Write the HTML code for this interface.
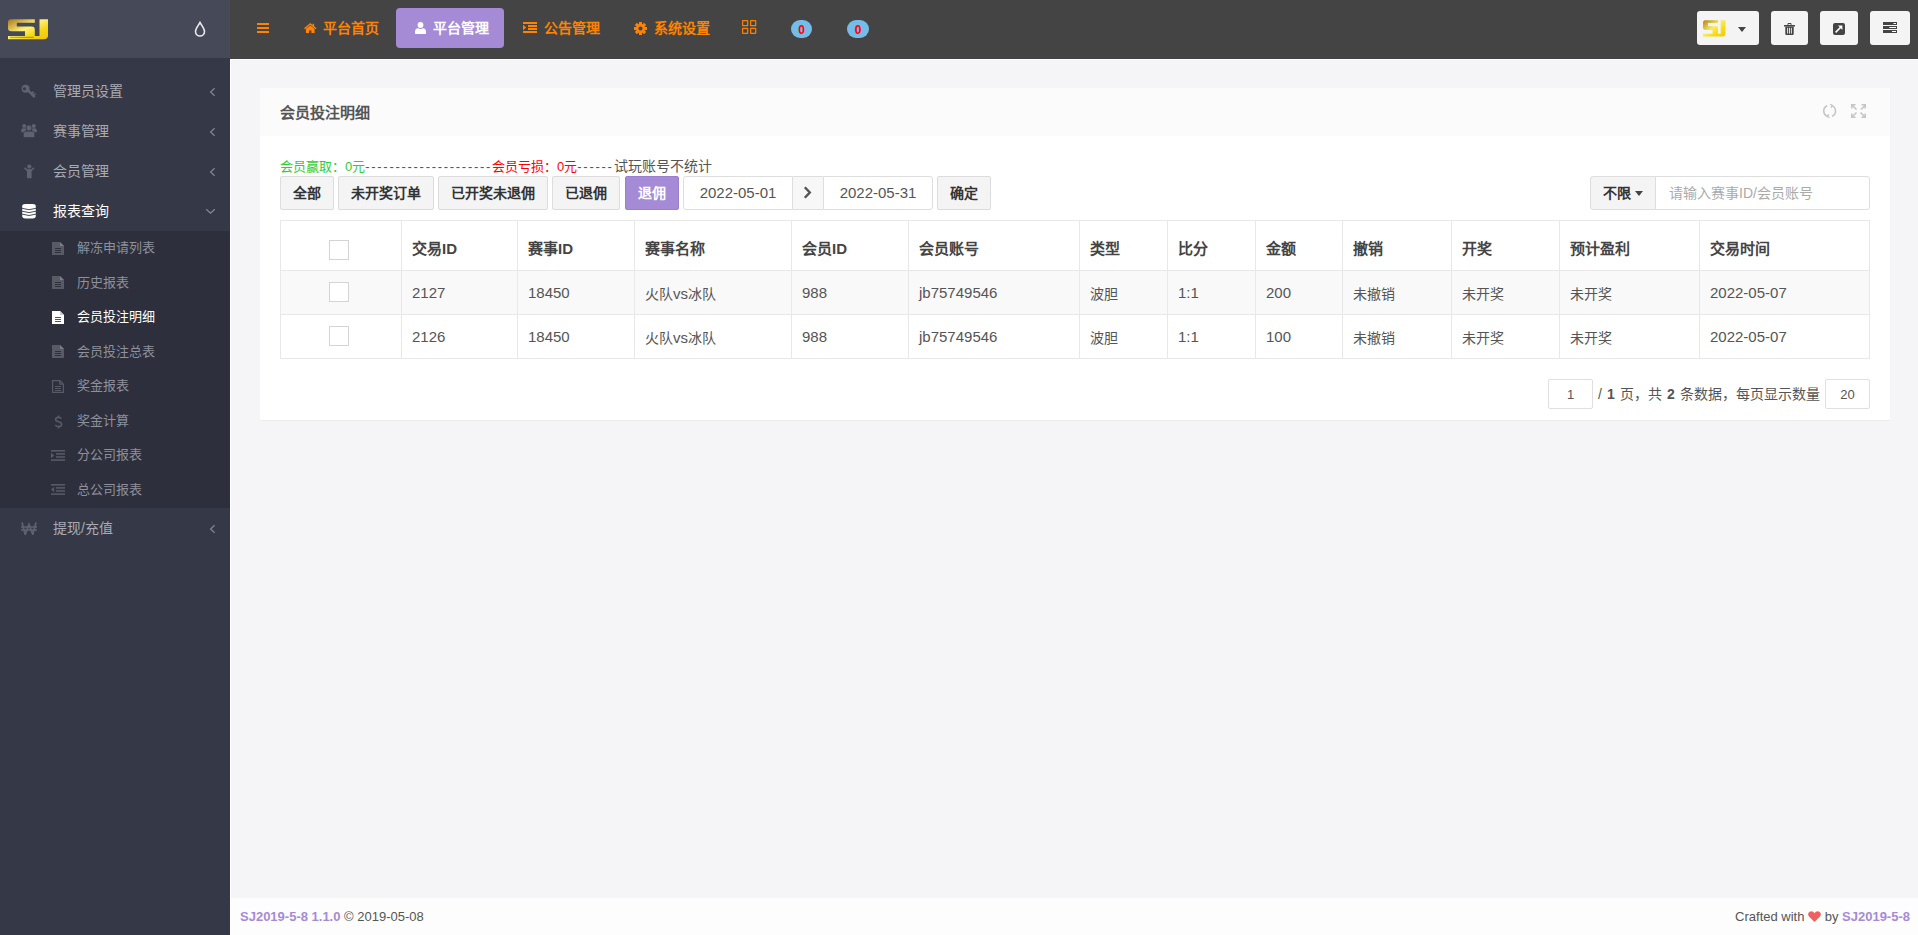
<!DOCTYPE html>
<html lang="zh-CN"><head><meta charset="utf-8">
<style>
*{margin:0;padding:0;box-sizing:border-box}
html,body{width:1918px;height:935px;overflow:hidden;background:#f5f5f7;font-family:"Liberation Sans",sans-serif;font-size:14px;color:#555}
.abs{position:absolute}
svg{position:absolute;display:block}
#side{position:absolute;left:0;top:0;width:230px;height:935px;background:#353847}
#logo{position:absolute;left:0;top:0;width:230px;height:58px;background:#464958}
.mi{position:absolute;left:0;width:230px;height:40px;line-height:40px;color:#a9abb4;font-size:14px}
.mi .tx{position:absolute;left:53px;top:0}
#sub{position:absolute;left:0;top:231px;width:230px;height:277px;background:#2d2f3c}
.si{position:absolute;left:0;width:230px;height:34.5px;line-height:34.5px;color:#8e909b;font-size:13px}
.si .tx{position:absolute;left:77px;top:0}
#hdr{position:absolute;left:230px;top:0;width:1688px;height:59px;background:#444}
.nv{position:absolute;top:0;height:56px;line-height:56px;color:#ff8200;font-weight:bold;font-size:14px;white-space:nowrap}
.hb{position:absolute;top:11px;height:34px;background:#f4f4f4;border-radius:3px}
#main{position:absolute;left:230px;top:59px;width:1688px;height:839px;background:#f5f5f7;border-top:1px solid #fff;border-left:1px solid #fff}
#panel{position:absolute;left:260px;top:88px;width:1630px;height:332px;background:#fff;box-shadow:0 1px 0 #ededf0}
#ph{position:absolute;left:0;top:0;width:1630px;height:48px;background:#fbfbfc}
.btn{position:absolute;top:176px;height:34px;line-height:32px;border:1px solid #dcdcdc;background:#f4f4f4;color:#333;font-weight:bold;font-size:14px;text-align:center;border-radius:2px}
.inp{position:absolute;top:176px;height:34px;line-height:32px;border:1px solid #dedede;background:#fff;color:#555;font-size:15px;text-align:center}
table{position:absolute;left:280px;top:220px;border-collapse:collapse;table-layout:fixed}
td,th{border:1px solid #e8e8e8;text-align:left;padding:0 0 0 10px;font-size:14px;color:#555;white-space:nowrap}
th{height:50px;font-size:15px;color:#444;font-weight:bold;padding-top:3px}
td{height:44px}
tr.odd td{background:#f9f9f9}
.n{font-size:15px}
.cb{display:block;position:relative;top:-1px;width:20px;height:20px;border:1px solid #d4d4d4;background:#fff;margin-left:38px}
th .cb{top:3px}
#foot{position:absolute;left:230px;top:898px;width:1688px;height:37px;background:#fdfdfd;font-size:13px;color:#555}
.pg{position:absolute;top:379px;height:30px;line-height:29px;border:1px solid #e0e0e0;background:#fff;border-radius:2px;text-align:center;font-size:13px;color:#555}
</style></head><body>

<div id="side">
  <div id="logo">
    <svg style="left:8px;top:18.5px" width="41" height="21" viewBox="0 0 41 21">
      <defs><linearGradient id="g1" x1="0" y1="0" x2="1" y2="1">
        <stop offset="0" stop-color="#a8761e"/><stop offset="0.45" stop-color="#fff07a"/><stop offset="0.7" stop-color="#f5d814"/><stop offset="1" stop-color="#f0c010"/></linearGradient></defs>
      <path fill="url(#g1)" d="M0,3.4 Q0,0.3 3.2,0.3 H26.8 V3.8 H8.8 V7.6 H23.8 Q26.8,7.6 26.8,10.6 V16.9 H17 V12.2 H3.2 Q0,12.2 0,9.2 Z M31.5,0.3 H40 V16.5 Q40,20.3 36,20.3 H0 V16.9 H31.5 Z"/>
      <path fill="#5a4a20" opacity="0.5" d="M1.8,17.8 H25.6 V18.8 H1.8 Z"/>
    </svg>
    <svg style="left:193px;top:21px" width="14" height="16" viewBox="0 0 14 16">
      <path d="M7,1.5 C5,5 2.5,7.5 2.5,10.5 A4.5,4.5 0 0 0 11.5,10.5 C11.5,7.5 9,5 7,1.5 Z" fill="none" stroke="#e8e8ee" stroke-width="1.6"/>
    </svg>
  </div>

  <!-- key -->
  <svg style="left:21px;top:84px" width="16" height="15" viewBox="0 0 16 15" fill="#5f6270">
    <path d="M4.6,0.8 A4,4 0 1 0 4.6,8.8 A4,4 0 1 0 4.6,0.8 Z M3.4,3.3 A1.5,1.5 0 1 1 3.4,6.3 A1.5,1.5 0 1 1 3.4,3.3 Z" fill-rule="evenodd"/>
    <path d="M6.4,7.6 L8.2,5.8 L14.6,12.2 L12.8,14 Z M10.6,8.4 L12,7 L13.4,8.4 L12,9.8 Z M12.6,10.4 L14,9 L15,10 L13.6,11.4 Z"/>
  </svg>
  
  <!-- users -->
  <svg style="left:21px;top:123px" width="16" height="15" viewBox="0 0 16 15" fill="#5f6270">
    <circle cx="3.2" cy="3" r="2"/><circle cx="12.8" cy="3" r="2"/>
    <path d="M0.2,9.2 V7 Q0.2,5.2 2.2,5.2 H4.8 V9.2 Z M15.8,9.2 V7 Q15.8,5.2 13.8,5.2 H11.2 V9.2 Z"/>
    <circle cx="8" cy="5" r="2.9" stroke="#353847" stroke-width="0.6"/>
    <path d="M2.3,14.6 V10.6 Q2.3,8.3 4.8,8.3 H11.2 Q13.7,8.3 13.7,10.6 V14.6 Z" stroke="#353847" stroke-width="0.6"/>
  </svg>
  <!-- male -->
  <svg style="left:24px;top:164px" width="11" height="15" viewBox="0 0 11 15" fill="#5f6270">
    <circle cx="5.3" cy="2.6" r="2.1"/>
    <path d="M0.8,3.3 L0,4.3 L3,7.2 V14.3 H7.6 V7.2 L10.6,4.3 L9.8,3.3 L7,5.2 H3.6 Z"/>
  </svg>
  <!-- database -->
  <svg style="left:22px;top:204px" width="14" height="15" viewBox="0 0 14 15">
    <rect x="0.2" y="0" width="13.6" height="14.5" rx="3.2" ry="2.4" fill="#fff"/>
    <path d="M0,4.3 Q7,7.1 14,4.3 M0,7.2 Q7,10 14,7.2 M0,10.1 Q7,12.9 14,10.1" stroke="#353847" stroke-width="0.9" fill="none"/>
  </svg>
  <!-- chevrons -->
  <svg style="left:209px;top:87px" width="7" height="10" viewBox="0 0 7 10"><path d="M5.6,1.2 L1.6,5 L5.6,8.8" fill="none" stroke="#80838f" stroke-width="1.3"/></svg>
  <svg style="left:209px;top:127px" width="7" height="10" viewBox="0 0 7 10"><path d="M5.6,1.2 L1.6,5 L5.6,8.8" fill="none" stroke="#80838f" stroke-width="1.3"/></svg>
  <svg style="left:209px;top:167px" width="7" height="10" viewBox="0 0 7 10"><path d="M5.6,1.2 L1.6,5 L5.6,8.8" fill="none" stroke="#80838f" stroke-width="1.3"/></svg>
  <svg style="left:205px;top:207px" width="11" height="8" viewBox="0 0 11 8"><path d="M1.2,2.2 L5.5,6.2 L9.8,2.2" fill="none" stroke="#858793" stroke-width="1.3"/></svg>
  <svg style="left:209px;top:524px" width="7" height="10" viewBox="0 0 7 10"><path d="M5.6,1.2 L1.6,5 L5.6,8.8" fill="none" stroke="#80838f" stroke-width="1.3"/></svg>

  <div class="mi" style="top:71px"><span class="tx">管理员设置</span></div>
  <div class="mi" style="top:111px"><span class="tx">赛事管理</span></div>
  <div class="mi" style="top:151px"><span class="tx">会员管理</span></div>
  <div class="mi" style="top:191px;color:#fff"><span class="tx">报表查询</span></div>
  <div id="sub">
    <div class="si" style="top:0"><span class="tx">解冻申请列表</span></div>
    <div class="si" style="top:34.5px"><span class="tx">历史报表</span></div>
    <div class="si" style="top:69px;color:#fff"><span class="tx">会员投注明细</span></div>
    <div class="si" style="top:103.5px"><span class="tx">会员投注总表</span></div>
    <div class="si" style="top:138px"><span class="tx">奖金报表</span></div>
    <div class="si" style="top:172.5px"><span class="tx">奖金计算</span></div>
    <div class="si" style="top:207px"><span class="tx">分公司报表</span></div>
    <div class="si" style="top:241.5px"><span class="tx">总公司报表</span></div>
  </div>
  <!-- sub icons -->
  <svg style="left:52px;top:242px" width="12" height="13" viewBox="0 0 12 13"><path d="M0,0 H8 L12,4 V13 H0 Z" fill="#585a66"/><path d="M8,0 V4 H12" fill="#7a7c88"/><path d="M3,6.5 H9 M3,8.5 H9 M3,10.5 H9" stroke="#2d2f3c" stroke-width="1"/></svg>
  <svg style="left:52px;top:276px" width="12" height="13" viewBox="0 0 12 13"><path d="M0,0 H8 L12,4 V13 H0 Z" fill="#585a66"/><path d="M8,0 V4 H12" fill="#7a7c88"/><path d="M3,6.5 H9 M3,8.5 H9 M3,10.5 H9" stroke="#2d2f3c" stroke-width="1"/></svg>
  <svg style="left:52px;top:311px" width="12" height="13" viewBox="0 0 12 13"><path d="M0,0 H8 L12,4 V13 H0 Z" fill="#fff"/><path d="M8,0 V4 H12" fill="#ccc"/><path d="M3,6.5 H9 M3,8.5 H9 M3,10.5 H9" stroke="#555" stroke-width="1"/></svg>
  <svg style="left:52px;top:345px" width="12" height="13" viewBox="0 0 12 13"><path d="M0,0 H8 L12,4 V13 H0 Z" fill="#585a66"/><path d="M8,0 V4 H12" fill="#7a7c88"/><path d="M3,6.5 H9 M3,8.5 H9 M3,10.5 H9" stroke="#2d2f3c" stroke-width="1"/></svg>
  <svg style="left:52px;top:380px" width="12" height="13" viewBox="0 0 12 13"><path d="M0.6,0.6 H7.8 L11.4,4.2 V12.4 H0.6 Z M7.8,0.6 V4.2 H11.4" fill="none" stroke="#585a66" stroke-width="1.2"/><path d="M3,6.5 H9 M3,8.5 H9 M3,10.5 H9" stroke="#585a66" stroke-width="1"/></svg>
  <svg style="left:54px;top:415px" width="9" height="14" viewBox="0 0 9 14"><path d="M7.4,3.6 Q6.8,2.4 4.5,2.4 Q1.6,2.4 1.6,4.6 Q1.6,6.3 4.5,6.8 Q7.6,7.3 7.6,9.4 Q7.6,11.6 4.5,11.6 Q2.1,11.6 1.3,10.2 M4.5,0.6 V2.4 M4.5,11.6 V13.4" fill="none" stroke="#585a66" stroke-width="1.6"/></svg>
  <svg style="left:51px;top:450px" width="14" height="11" viewBox="0 0 14 11" fill="#585a66"><rect x="0" y="0" width="14" height="1.6"/><rect x="5" y="3.1" width="9" height="1.6"/><rect x="5" y="6.2" width="9" height="1.6"/><rect x="0" y="9.3" width="14" height="1.6"/><path d="M0,2.8 L3.2,5.5 L0,8.2 Z"/></svg>
  <svg style="left:51px;top:484px" width="14" height="11" viewBox="0 0 14 11" fill="#585a66"><rect x="0" y="0" width="14" height="1.6"/><rect x="5" y="3.1" width="9" height="1.6"/><rect x="5" y="6.2" width="9" height="1.6"/><rect x="0" y="9.3" width="14" height="1.6"/><path d="M3.2,2.8 L0,5.5 L3.2,8.2 Z"/></svg>

  <div class="mi" style="top:508px"><span class="tx">提现/充值</span></div>
  <!-- won -->
  <svg style="left:21px;top:522px" width="16" height="13" viewBox="0 0 16 13"><path d="M1,0.5 L4.2,12.5 L8,2.5 L11.8,12.5 L15,0.5 M0,5 H16 M0,8 H16" fill="none" stroke="#5f6270" stroke-width="1.7"/></svg>
</div>

<div id="hdr"></div>
<!-- bars -->
<svg style="left:257px;top:23px" width="12" height="10" viewBox="0 0 12 10" fill="#ff8200"><rect y="0" width="12" height="2"/><rect y="4" width="12" height="2"/><rect y="8" width="12" height="2"/></svg>
<!-- home -->
<svg style="left:304px;top:22.6px" width="12.5" height="10.6" viewBox="0 0.5 13 11" preserveAspectRatio="none" fill="#ff8200"><path d="M6.5,0.5 L0,6 L1,7 L6.5,2.4 L12,7 L13,6 L10.5,3.9 V1.2 H9 V2.6 Z"/><path d="M2,6.6 L6.5,3 L11,6.6 V11.5 H7.7 V8.3 H5.3 V11.5 H2 Z"/></svg>
<div class="nv" style="left:323px">平台首页</div>
<div class="abs" style="left:396px;top:8px;width:108px;height:40px;background:#a58bd5;border-radius:4px"></div>
<!-- user -->
<svg style="left:415px;top:22px" width="11" height="12" viewBox="0 0 11 12" fill="#fff"><circle cx="5.5" cy="3" r="2.9"/><path d="M0,12 V9.8 Q0,6.6 3,6.3 Q5.5,7.8 8,6.3 Q11,6.6 11,9.8 V12 Z"/></svg>
<div class="nv" style="left:433px;color:#fff">平台管理</div>
<!-- indent -->
<svg style="left:523px;top:22px" width="14" height="11" viewBox="0 0 14 11" fill="#ff8200"><rect x="0" y="0" width="14" height="2"/><rect x="5" y="3" width="9" height="2"/><rect x="5" y="6" width="9" height="2"/><rect x="0" y="9" width="14" height="2"/><path d="M0,2.8 L3.2,5.5 L0,8.2 Z"/></svg>
<div class="nv" style="left:544px">公告管理</div>
<!-- cog -->
<svg style="left:634px;top:22px" width="13" height="13" viewBox="0 0 13 13"><g fill="#ff8200" transform="translate(6.5,6.5)"><circle r="4.6"/><rect x="-1.5" y="-6.5" width="3" height="13"/><rect x="-1.5" y="-6.5" width="3" height="13" transform="rotate(45)"/><rect x="-1.5" y="-6.5" width="3" height="13" transform="rotate(90)"/><rect x="-1.5" y="-6.5" width="3" height="13" transform="rotate(135)"/></g><circle cx="6.5" cy="6.5" r="2" fill="#444"/></svg>
<div class="nv" style="left:654px">系统设置</div>
<!-- grid -->
<svg style="left:742px;top:20px" width="15" height="15" viewBox="0 0 15 15" fill="none" stroke="#ff8000" stroke-width="1.2"><rect x="0.6" y="0.6" width="5.1" height="5.1" rx="0.3"/><rect x="8.6" y="0.6" width="5.1" height="5.1" rx="0.3"/><rect x="0.6" y="8.3" width="5.1" height="5.1" rx="0.3"/><rect x="8.6" y="8.3" width="5.1" height="5.1" rx="0.3"/></svg>
<div class="abs" style="left:791px;top:20px;width:21px;height:18px;border-radius:9px;background:#74bde9;color:#f00;font-weight:bold;font-size:12px;line-height:20px;text-align:center">0</div>
<div class="abs" style="left:847px;top:20px;width:22px;height:18px;border-radius:9px;background:#74bde9;color:#f00;font-weight:bold;font-size:12px;line-height:20px;text-align:center">0</div>

<div class="hb" style="left:1697px;width:62px"></div>
<svg style="left:1703px;top:19.5px" width="23" height="17" viewBox="0 0 41 21" preserveAspectRatio="none">
  <defs><linearGradient id="g2" x1="0" y1="0" x2="1" y2="1"><stop offset="0" stop-color="#b0801c"/><stop offset="0.45" stop-color="#f8ec60"/><stop offset="0.7" stop-color="#f8dc10"/><stop offset="1" stop-color="#f0c810"/></linearGradient></defs>
  <path fill="url(#g2)" d="M0,3.4 Q0,0.3 3.2,0.3 H26.8 V3.8 H8.8 V7.6 H23.8 Q26.8,7.6 26.8,10.6 V16.9 H17 V12.2 H3.2 Q0,12.2 0,9.2 Z M31.5,0.3 H40 V16.5 Q40,20.3 36,20.3 H0 V16.9 H31.5 Z"/>
</svg>
<svg style="left:1738px;top:27px" width="8" height="5" viewBox="0 0 8 5"><path d="M0,0 H8 L4,5 Z" fill="#444"/></svg>
<div class="hb" style="left:1771px;width:37px"></div>
<svg style="left:1784px;top:23px" width="11" height="12" viewBox="0 0 11 12" fill="#444"><path d="M3.5,2 V1 Q3.5,0 4.5,0 H6.5 Q7.5,0 7.5,1 V2 H6.6 V1 H4.4 V2 Z"/><rect x="0" y="2" width="11" height="1.5"/><path d="M1.3,3.5 H9.7 V11 Q9.7,12 8.7,12 H2.3 Q1.3,12 1.3,11 Z"/><path d="M3.6,4.8 V10.6 M5.5,4.8 V10.6 M7.4,4.8 V10.6" stroke="#f4f4f4" stroke-width="0.9"/></svg>
<div class="hb" style="left:1820px;width:38px"></div>
<svg style="left:1833px;top:23px" width="12" height="12" viewBox="0 0 12 12"><rect width="12" height="12" rx="2" fill="#444"/><path d="M2.6,9.4 L8.2,3.8" stroke="#fff" stroke-width="1.6"/><path d="M5,2.6 H9.4 V7 Z" fill="#fff"/></svg>
<div class="hb" style="left:1870px;width:40px"></div>
<svg style="left:1883px;top:22px" width="14" height="11" viewBox="0 0 14 11" fill="#444"><rect y="0" width="14" height="3"/><rect y="4" width="14" height="3"/><rect y="8" width="14" height="3"/><rect x="10.5" y="1" width="2.5" height="1" fill="#fff"/><rect x="6.3" y="5" width="6.7" height="1" fill="#fff"/><rect x="9" y="9" width="4" height="1" fill="#fff"/></svg>

<div id="main"></div>
<div id="panel"><div id="ph"></div></div>
<div class="abs" style="left:280px;top:104px;font-size:15px;font-weight:bold;color:#555;line-height:18px">会员投注明细</div>
<!-- refresh -->
<svg style="left:1823px;top:104px" width="14" height="14" viewBox="0 0 14 14" fill="none" stroke="#c4c4c4" stroke-width="1.5"><path d="M4.2,1.8 A5.6,5.6 0 0 0 5,12.4"/><path d="M9,12.2 A5.6,5.6 0 0 0 8.4,1.6"/><path d="M7.2,0.3 L9.4,1.5 L8,3.6" stroke-width="1.3"/><path d="M6.6,13.7 L4.4,12.5 L5.8,10.4" stroke-width="1.3"/></svg>
<!-- expand -->
<svg style="left:1851px;top:104px" width="15" height="14" viewBox="0 0 15 14" fill="none" stroke="#c4c4c4" stroke-width="1.5"><path d="M1,1 L5.5,5.5 M10,5.5 L14,1.5 M1,13 L5.5,8.5 M14,13 L9.5,8.5"/><path d="M0.8,4.5 V0.8 H4.5 M10.5,0.8 H14.2 V4.5 M0.8,9.5 V13.2 H4.5 M10.5,13.2 H14.2 V9.5"/></svg>

<div class="abs" style="left:280px;top:157px;font-size:13px;line-height:18px;white-space:nowrap"><span style="color:#3c3">会员赢取：0元</span><span style="color:#555;letter-spacing:1.71px">---------------------</span><span style="color:#f00">会员亏损：0元</span><span style="color:#555;letter-spacing:1.71px">------</span><span style="color:#555;font-size:14px">试玩账号不统计</span></div>

<div class="btn" style="left:280px;width:54px">全部</div>
<div class="btn" style="left:338px;width:96px">未开奖订单</div>
<div class="btn" style="left:438px;width:110px">已开奖未退佣</div>
<div class="btn" style="left:552px;width:68px">已退佣</div>
<div class="btn" style="left:625px;width:54px;background:#a58bd5;border-color:#9a7fcc;color:#fff">退佣</div>

<div class="inp" style="left:683px;width:110px;border-radius:3px 0 0 3px">2022-05-01</div>
<div class="inp" style="left:793px;width:30px;background:#f7f7f7;border-left:none;border-right:none"></div>
<svg style="left:803px;top:186px" width="9" height="13" viewBox="0 0 9 13"><path d="M1.8,1.2 L6.8,6.5 L1.8,11.8" fill="none" stroke="#555" stroke-width="2.4"/></svg>
<div class="inp" style="left:823px;width:110px;border-radius:0 3px 3px 0">2022-05-31</div>
<div class="btn" style="left:937px;width:54px">确定</div>

<div class="inp" style="left:1590px;width:66px;background:#f4f4f4;border-radius:3px 0 0 3px;font-size:14px;font-weight:bold;color:#333;text-align:left;padding-left:12px">不限</div>
<svg style="left:1635px;top:191px" width="8" height="5" viewBox="0 0 8 5"><path d="M0,0 H8 L4,5 Z" fill="#444"/></svg>
<div class="inp" style="left:1655px;width:215px;border-radius:0 3px 3px 0;font-size:14px;color:#aaa;text-align:left;padding-left:13px">请输入赛事ID/会员账号</div>

<table>
<colgroup><col style="width:121px"><col style="width:116px"><col style="width:117px"><col style="width:157px"><col style="width:117px"><col style="width:171px"><col style="width:88px"><col style="width:88px"><col style="width:87px"><col style="width:109px"><col style="width:108px"><col style="width:140px"><col style="width:170px"></colgroup>
<tr><th><span class="cb"></span></th><th>交易ID</th><th>赛事ID</th><th>赛事名称</th><th>会员ID</th><th>会员账号</th><th>类型</th><th>比分</th><th>金额</th><th>撤销</th><th>开奖</th><th>预计盈利</th><th>交易时间</th></tr>
<tr class="odd"><td><span class="cb"></span></td><td><span class="n">2127</span></td><td><span class="n">18450</span></td><td>火队<span class="n">vs</span>冰队</td><td><span class="n">988</span></td><td><span class="n">jb75749546</span></td><td>波胆</td><td><span class="n">1:1</span></td><td><span class="n">200</span></td><td>未撤销</td><td>未开奖</td><td>未开奖</td><td><span class="n">2022-05-07</span></td></tr>
<tr><td><span class="cb"></span></td><td><span class="n">2126</span></td><td><span class="n">18450</span></td><td>火队<span class="n">vs</span>冰队</td><td><span class="n">988</span></td><td><span class="n">jb75749546</span></td><td>波胆</td><td><span class="n">1:1</span></td><td><span class="n">100</span></td><td>未撤销</td><td>未开奖</td><td>未开奖</td><td><span class="n">2022-05-07</span></td></tr>
</table>

<div class="pg" style="left:1548px;width:45px">1</div>
<div class="abs" style="left:1598px;top:384px;line-height:20px;font-size:14px;color:#555;white-space:nowrap;word-spacing:1.2px">/ <b>1</b> 页，共 <b>2</b> 条数据，每页显示数量</div>
<div class="pg" style="left:1825px;width:45px">20</div>

<div id="foot">
  <div class="abs" style="left:10px;top:10px;line-height:18px;white-space:nowrap"><b style="color:#a58bd5">SJ2019-5-8 1.1.0</b> © 2019-05-08</div>
  <div class="abs" style="right:8px;top:10px;line-height:18px;white-space:nowrap">Crafted with <svg style="position:relative;display:inline-block;vertical-align:-1px" width="13" height="11" viewBox="0 0 13 11"><path d="M6.5,11 L1.2,5.8 Q-0.6,3.8 0.6,1.7 Q2.4,-0.8 5,0.8 Q6,1.5 6.5,2.3 Q7,1.5 8,0.8 Q10.6,-0.8 12.4,1.7 Q13.6,3.8 11.8,5.8 Z" fill="#f55e5e"/></svg> by <b style="color:#a58bd5">SJ2019-5-8</b></div>
</div>
</body></html>
